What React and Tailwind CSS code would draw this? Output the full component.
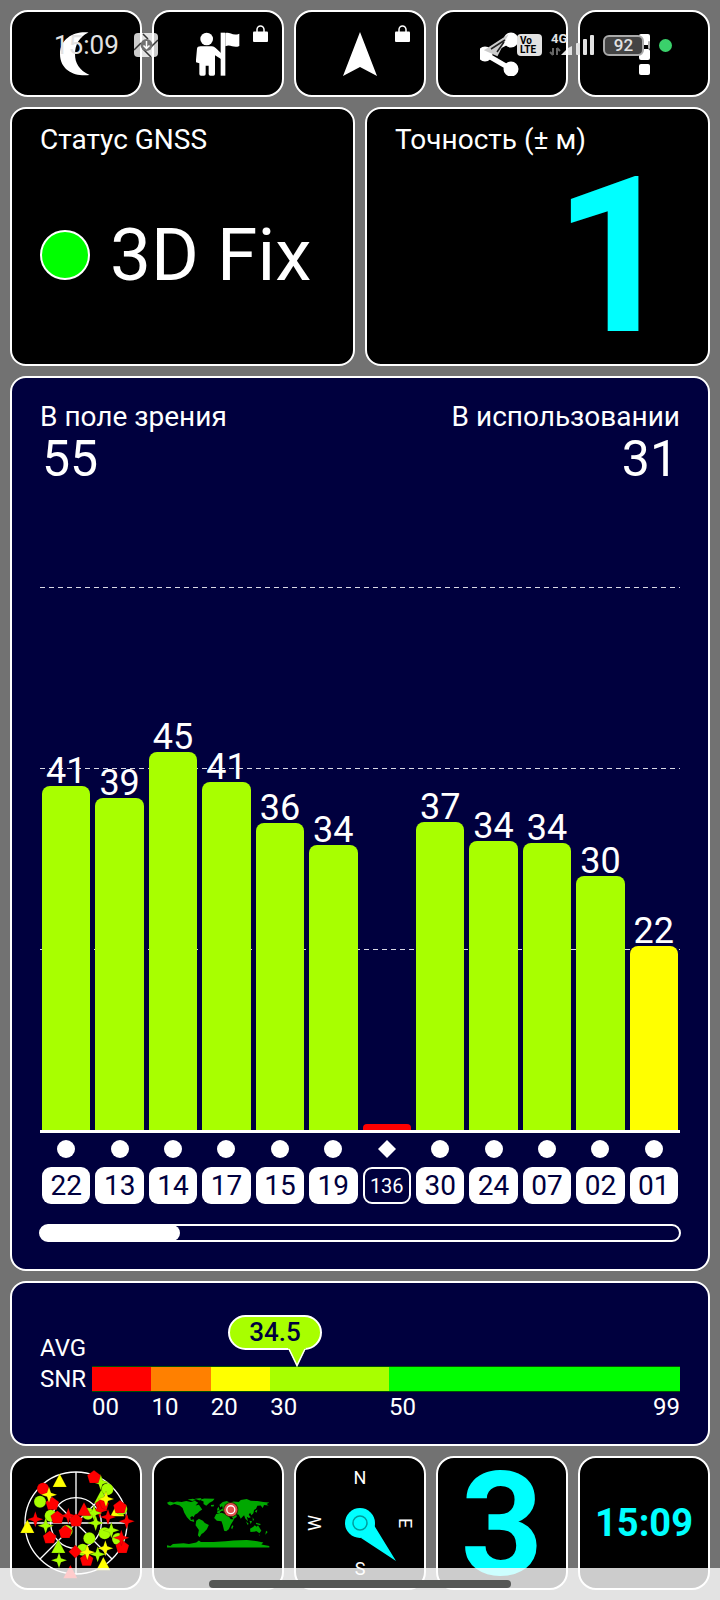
const SATELLITES = [
  { id: "22", snr: 41, level: 63.4 },
  { id: "13", snr: 39, level: 61.1 },
  { id: "14", snr: 45, level: 69.6 },
  { id: "17", snr: 41, level: 64.1 },
  { id: "15", snr: 36, level: 56.5 },
  { id: "19", snr: 34, level: 52.5 },
  { id: "136", snr: null, level: 1.1, sbas: true },
  { id: "30", snr: 37, level: 56.7 },
  { id: "24", snr: 34, level: 53.2 },
  { id: "07", snr: 34, level: 52.9 },
  { id: "02", snr: 30, level: 46.8 },
  { id: "01", snr: 22, level: 33.9 },
];

const SNR_BANDS = [
  { from: "00", span: 10, color: "bg-[#ff0000]" },
  { from: "10", span: 10, color: "bg-[#ff8000]" },
  { from: "20", span: 10, color: "bg-[#ffff00]" },
  { from: "30", span: 20, color: "bg-[#a8ff00]" },
  { from: "50", span: 49, color: "bg-[#00ff00]" },
];

const AVG_SNR = 34.5;

const RED = "#ff0000";
const LIME = "#a8ff00";
const YELLOW = "#ffff00";

// [shape, x, y, colour], painted in order
const SKY = [
  ["circle", 127, 147, RED],
  ["circle", 118, 186, LIME],
  ["pentagon", 155, 192, RED],
  ["star", 145, 165, YELLOW],
  ["triangle", 177, 124, YELLOW],
  ["star", 300, 128, LIME],
  ["circle", 320, 149, LIME],
  ["pentagon", 280, 112, RED],
  ["triangle", 302, 172, LIME],
  ["pentagon", 304, 196, RED],
  ["star", 297, 212, RED],
  ["star", 316, 178, YELLOW],
  ["triangle", 350, 212, YELLOW],
  ["circle", 362, 208, LIME],
  ["pentagon", 358, 202, RED],
  ["circle", 150, 228, LIME],
  ["star", 135, 258, LIME],
  ["star", 104, 239, RED],
  ["pentagon", 170, 233, RED],
  ["star", 203, 228, RED],
  ["circle", 262, 222, LIME],
  ["star", 280, 220, LIME],
  ["triangle", 250, 210, RED],
  ["pentagon", 226, 242, RED],
  ["star", 285, 250, LIME],
  ["star", 322, 232, RED],
  ["star", 378, 245, RED],
  ["triangle", 80, 262, YELLOW],
  ["circle", 198, 274, LIME],
  ["pentagon", 194, 277, RED],
  ["pentagon", 147, 293, RED],
  ["circle", 266, 296, LIME],
  ["circle", 312, 281, LIME],
  ["star", 332, 272, LIME],
  ["circle", 352, 298, LIME],
  ["pentagon", 365, 322, RED],
  ["star", 362, 294, RED],
  ["triangle", 173, 322, LIME],
  ["star", 175, 362, LIME],
  ["circle", 246, 330, LIME],
  ["diamond", 224, 336, RED],
  ["pentagon", 258, 360, RED],
  ["star", 260, 338, YELLOW],
  ["star", 291, 344, LIME],
  ["star", 314, 326, YELLOW],
  ["triangle", 308, 374, YELLOW],
  ["triangle", 209, 398, RED],
];

const SHAPES = {
  pentagon: "0,-20 20,-5 13,18 -13,18 -20,-5",
  star: "0,-24 6,-6 24,0 6,6 0,24 -6,6 -24,0 -6,-6",
  triangle: "0,-22 21,18 -21,18",
  diamond: "0,-20 20,0 0,20 -20,0",
};

export default function App() {
  return (
    <div className="relative min-h-screen bg-[#727272] font-['Roboto',sans-serif] text-white">
      <main className="flex min-h-screen flex-col gap-2.5 p-2.5">
        <Toolbar />
        <div className="grid grid-cols-2 gap-2.5">
          <FixStatus />
          <Accuracy />
        </div>
        <SignalChart />
        <AverageSnr />
        <BottomTiles />
      </main>
      <StatusBar />
      <div className="pointer-events-none absolute inset-x-0 bottom-0 flex h-8 justify-center bg-white/80 pt-3">
        <div className="h-2 w-[42%] rounded-full bg-[#555755]" />
      </div>
    </div>
  );
}

function Toolbar() {
  return (
    <nav className="grid grid-cols-5 gap-2.5">
      <ToolButton label="Ночной режим">
        <svg viewBox="0 0 44 44" className="size-11" fill="#fff">
          <path d="M34.500 0.500C21 -1 6 6 6 22C6 39 22 45 35.500 43C25 38 21 31 21 22C21 13 25 5 34.500 0.500Z" />
        </svg>
      </ToolButton>
      <ToolButton label="Навигация" locked>
        <svg viewBox="588 92 132 132" className="size-11" fill="#fff">
          <circle cx="620" cy="113" r="19" />
          <path d="M602 135H636Q642 135 647 140L663 155V173L645 162V218Q645 223 640 223H631Q626 223 626 218V193H617V218Q617 223 612 223H603Q598 223 598 218V186L588 183V175L591 142Q592 135 602 135Z" />
          <path d="M662 94H676V223H662Z" />
          <path d="M676 96C688 90 698 106 718 97V134C700 142 692 127 676 135Z" />
        </svg>
      </ToolButton>
      <ToolButton label="Направление" locked>
        <svg viewBox="0 0 44 44" className="size-11" fill="#fff">
          <path d="M22 0L39 44L22 35L5 44Z" />
        </svg>
      </ToolButton>
      <ToolButton label="Поделиться">
        <svg viewBox="0 0 44 44" className="size-11" fill="#fff" stroke="#fff" strokeWidth="5">
          <path d="M31 8L5 22L31 37" fill="none" />
          <circle cx="31" cy="8" r="5" />
          <circle cx="5" cy="22" r="5" />
          <circle cx="31" cy="37" r="5" />
        </svg>
      </ToolButton>
      <ToolButton label="Меню">
        <svg viewBox="0 0 44 44" className="size-11" fill="#fff">
          <rect x="17" y="2" width="11" height="11" rx="2" />
          <rect x="17" y="17" width="11" height="11" rx="2" />
          <rect x="17" y="32" width="11" height="11" rx="2" />
        </svg>
      </ToolButton>
    </nav>
  );
}

function ToolButton({ label, locked, children }) {
  return (
    <button
      type="button"
      aria-label={label}
      className="relative flex h-[87px] items-center justify-center rounded-[18px] border-2 border-white bg-black"
    >
      {children}
      {locked && (
        <svg viewBox="0 0 15 17" className="absolute top-[13px] right-[14px] h-[17px] w-[15px]">
          <path d="M4 8V4.500A3.500 3.500 0 0 1 11 4.500V8" fill="none" stroke="#fff" strokeWidth="1.500" />
          <rect y="6.500" width="15" height="10.500" rx="1" fill="#fff" />
        </svg>
      )}
    </button>
  );
}

function FixStatus() {
  return (
    <section className="flex h-[259px] flex-col rounded-2xl border-2 border-white bg-black px-7 pt-[14px]">
      <h2 className="text-[28px] leading-[34px]">Статус GNSS</h2>
      <div className="mt-[58px] flex items-center gap-5">
        <span className="size-[50px] shrink-0 rounded-full border-2 border-white bg-[#00ff00]" />
        <span className="text-[73px] leading-[80px] whitespace-nowrap">3D Fix</span>
      </div>
    </section>
  );
}

function Accuracy() {
  return (
    <section className="flex h-[259px] flex-col rounded-2xl border-2 border-white bg-black px-7 pt-[14px]">
      <h2 className="text-[28px] leading-[34px]">Точность (± м)</h2>
      <span className="pr-0.5 text-right text-[218px] leading-[200px] font-bold text-[#00ffff]">1</span>
    </section>
  );
}

function SignalChart() {
  return (
    <section className="flex flex-1 flex-col rounded-2xl border-2 border-white bg-[#00003e] px-7 pt-[22px] pb-[27px]">
      <div className="flex justify-between">
        <Count label="В поле зрения" value="55" />
        <Count label="В использовании" value="31" end />
      </div>

      <div className="relative mt-[103px] flex min-h-[360px] flex-1 flex-col border-b-[3px] border-white">
        <div className="absolute inset-0 flex flex-col">
          <DashedRow />
          <DashedRow />
          <DashedRow />
        </div>
        <div className="relative flex flex-1 items-stretch gap-[5px] px-0.5">
          {SATELLITES.map((sat) => (
            <div key={sat.id} className="flex flex-1 flex-col justify-end">
              <span className="text-center text-[36px] leading-[30px]">{sat.snr}</span>
              <div
                className={
                  sat.snr === null
                    ? "rounded-t-[4px] bg-[#ff0000]"
                    : sat.snr < 30
                      ? "rounded-t-lg bg-[#ffff00]"
                      : "rounded-t-lg bg-[#a8ff00]"
                }
                style={{ height: `${sat.level}%` }}
              />
            </div>
          ))}
        </div>
      </div>

      <div className="mt-[7px] flex gap-[5px] px-0.5">
        {SATELLITES.map((sat) => (
          <div key={sat.id} className="flex flex-1 flex-col items-center gap-[9px]">
            <svg viewBox="0 0 18 18" className="size-[18px]" fill="#fff">
              {sat.sbas ? <path d="M9 0L18 9L9 18L0 9Z" /> : <circle cx="9" cy="9" r="9" />}
            </svg>
            {sat.sbas ? (
              <span className="flex h-[37px] w-full items-center justify-center rounded-[9px] border-2 border-white text-[20px]">
                {sat.id}
              </span>
            ) : (
              <span className="flex h-[37px] w-full items-center justify-center rounded-[9px] bg-white text-[28px] text-[#00003e]">
                {sat.id}
              </span>
            )}
          </div>
        ))}
      </div>

      <div className="-mx-px mt-5 h-[18px] rounded-full border-2 border-white">
        <div className="-m-px h-4 w-[22%] rounded-full bg-white" />
      </div>
    </section>
  );
}

function Count({ label, value, end }) {
  return (
    <div className={end ? "flex flex-col text-right" : "flex flex-col"}>
      <span className="text-[28px] leading-[34px]">{label}</span>
      <span className="px-0.5 text-[50px] leading-[50px]">{value}</span>
    </div>
  );
}

function DashedRow() {
  return (
    <div className="flex-1">
      <div className="h-px bg-[repeating-linear-gradient(90deg,#d8d8e4_0_5px,transparent_5px_9px)]" />
    </div>
  );
}

function AverageSnr() {
  return (
    <section className="flex rounded-2xl border-2 border-white bg-[#00003e] px-7 pt-[50px] pb-[22px] text-[24px]">
      <div className="w-[52px] shrink-0 leading-[31px]">
        AVG
        <br />
        SNR
      </div>
      <div className="mt-[33px] flex-1">
        <div className="relative flex h-[26px] border-y border-[#005000]">
          {SNR_BANDS.map((band) => (
            <div key={band.from} className={band.color} style={{ flexGrow: band.span }} />
          ))}
          <div
            className="absolute bottom-full"
            style={{ left: `${(AVG_SNR / 99) * 100}%` }}
          >
            <div className="relative -ml-[69px] flex h-[52px] w-[94px] flex-col">
              <span className="flex h-[35px] items-center justify-center rounded-full border-2 border-white bg-[#a8ff00] text-[26px] font-medium text-[#00003e]">
                {AVG_SNR}
              </span>
              <svg viewBox="0 0 18 19" className="absolute bottom-0 left-[60px] h-[19px] w-[18px]">
                <path d="M0 0L9 19L18 0Z" fill="#a8ff00" />
                <path d="M1 1L9 17.500L17 1" fill="none" stroke="#fff" strokeWidth="1.500" />
              </svg>
            </div>
          </div>
        </div>
        <div className="flex leading-[30px]">
          {SNR_BANDS.map((band) => (
            <span key={band.from} className="flex w-0 justify-between" style={{ flexGrow: band.span }}>
              {band.from}
              {band.from === "50" && <span>99</span>}
            </span>
          ))}
        </div>
      </div>
    </section>
  );
}

function BottomTiles() {
  return (
    <nav className="grid grid-cols-5 gap-2.5">
      <Tile label="Карта неба">
        <SkyPlot />
      </Tile>
      <Tile label="Карта мира">
        <WorldMap />
      </Tile>
      <Tile label="Компас">
        <Compass />
      </Tile>
      <Tile>
        <span className="pt-1.5 text-[144px] leading-[120px] font-bold text-[#00ffff]">3</span>
      </Tile>
      <Tile>
        <span className="text-[38px] leading-[44px] font-bold text-[#00ffff]">15:09</span>
      </Tile>
    </nav>
  );
}

function Tile({ label, children }) {
  return (
    <button
      type="button"
      aria-label={label}
      className="flex h-[134px] items-center justify-center rounded-[18px] border-2 border-white bg-black"
    >
      {children}
    </button>
  );
}

function SkyPlot() {
  return (
    <svg viewBox="46 70 360 360" className="size-[120px]">
      <g fill="none" stroke="#fff" strokeWidth="4">
        <circle cx="226" cy="250" r="153" />
        <circle cx="226" cy="250" r="76" />
        <path d="M226 97V403M73 250H379M118 142L334 358M334 142L118 358" />
      </g>
      {SKY.map(([shape, x, y, color], i) =>
        shape === "circle" ? (
          <circle key={i} cx={x} cy={y} r="18" fill={color} stroke="#000" strokeOpacity="0.4" />
        ) : (
          <polygon
            key={i}
            points={SHAPES[shape]}
            transform={`translate(${x} ${y})`}
            fill={color}
            stroke="#000"
            strokeOpacity="0.4"
          />
        ),
      )}
    </svg>
  );
}

function WorldMap() {
  return (
    <svg viewBox="0 0 310 150" className="h-[50px] w-[103px]" fill="#00a800">
      <path d="M0 14L8 10L20 13L30 10L44 12L58 9L72 12L84 8L94 14L86 22L96 20L106 34L98 40L92 46L84 50L80 58L76 54L70 58L72 66L80 64L82 72L70 68L60 58L52 44L47 30L38 22L22 18L10 22L4 19Z" />
      <path d="M62 4L78 2L88 6L76 9ZM84 2L104 0L98 7ZM98 5L112 1L143 2L138 9L128 14L118 23L110 18L110 10Z" />
      <path d="M88 68L96 62L108 68L114 75L126 81L120 94L110 104L104 108L98 118L93 112L96 96L86 82Z" />
      <path d="M132 21L142 20L140 25L133 25ZM151 32L156 26L158 36L151 38Z" />
      <path d="M150 44L152 40L160 36L168 31L166 24L160 28L158 20L168 12L180 9L190 14L200 10L216 12L222 6L240 3L252 8L272 9L290 12L308 13L300 18L306 22L292 21L288 30L282 22L272 23L268 32L262 36L260 46L254 52L250 44L246 50L252 58L246 60L240 56L244 70L236 62L232 52L226 58L222 62L216 50L208 48L210 56L200 64L192 52L184 48L180 42L174 44L168 38L162 40L158 46Z" />
      <path d="M148 48L164 44L182 50L192 64L202 64L192 80L186 94L178 100L172 98L168 82L164 70L150 68L142 60ZM196 82L200 84L196 94L193 90Z" />
      <path d="M250 92L260 86L264 82L270 86L274 82L284 98L278 106L270 100L260 101L251 102Z" />
      <path d="M238 70L246 78L242 80ZM248 68L256 70L252 78ZM258 58L262 66L258 68ZM268 74L282 78L280 82L268 78ZM264 40L272 34L270 44ZM298 98L303 102L296 110ZM276 110L279 110L278 113Z" />
      <path d="M0 142L10 144L18 138L50 136L66 138L88 134L96 128L102 132L140 132L176 130L200 128L240 126L272 130L290 134L284 140L308 144V149H0Z" />
      <circle cx="192" cy="35" r="23" fill="#400" fillOpacity="0.7" />
      <circle cx="192" cy="35" r="20" fill="#e05050" />
      <circle cx="192" cy="35" r="12" fill="none" stroke="#fff" strokeWidth="4" />
    </svg>
  );
}

function Compass() {
  return (
    <svg
      viewBox="-60 -60 120 120"
      className="size-[120px]"
      fill="#fff"
      fontSize="18"
      textAnchor="middle"
    >
      <text y="-39">N</text>
      <text y="-39" transform="rotate(90)">E</text>
      <text y="52">S</text>
      <text y="-39" transform="rotate(-90)">W</text>
      <path d="M14 -4L14.500 3L36 38L1 15Z" fill="#00ffff" />
      <circle r="15" fill="#00ffff" />
      <circle r="7" fill="none" stroke="#009c9c" strokeWidth="1.500" />
    </svg>
  );
}

function StatusBar() {
  return (
    <div className="pointer-events-none absolute inset-x-0 top-0 flex h-[90px] items-center justify-between pr-12 pl-[54px] text-[#e2e2e2]">
      <div className="flex items-center gap-[15px]">
        <span className="text-[26px] leading-[30px]">15:09</span>
        <svg viewBox="0 0 24 24" className="size-6">
          <rect width="24" height="24" rx="4" fill="#fff" fillOpacity="0.8" />
          <path d="M9 1L14 6M0 17L7 10M17 14L24 7M9 16L17 24" stroke="#333" strokeWidth="1.500" />
          <circle cx="12.500" cy="12" r="6" fill="#727272" />
          <path d="M12.500 8V15M9.500 12.500L12.500 15.500L15.500 12.500" fill="none" stroke="#fff" strokeWidth="1.500" />
        </svg>
      </div>
      <div className="flex items-center">
        <svg viewBox="0 0 28 24" className="h-6 w-7">
          <path d="M2 17L22 4L13 22Z" fill="#ccc" stroke="#ccc" strokeWidth="2" />
          <path d="M7 16L21 7M13 19L20 9" stroke="#222" strokeWidth="1.500" />
        </svg>
        <span className="ml-[5px] flex h-[22px] w-[25px] flex-col justify-center rounded-[4px] bg-[#e2e2e2] pl-[3px] text-[10px] leading-[9px] font-bold text-black">
          <span>Vo</span>
          <span>LTE</span>
        </span>
        <span className="relative ml-[7px] h-[22px] w-[45px]">
          <svg viewBox="0 0 45 22" className="size-full">
            <path d="M4 14V21M4 21L1 18M8 21V14M8 14L11 17" fill="none" stroke="#666" strokeWidth="2" />
            <g fill="#e2e2e2">
              <path d="M12 21L17 16V21Z" />
              <path d="M19 14L23 12V21H19Z" />
              <rect x="27" y="9" width="4" height="12" rx="1" />
              <rect x="34" y="5" width="4" height="16" rx="1" />
              <rect x="41" y="1" width="4" height="20" rx="1" />
            </g>
          </svg>
          <span className="absolute -top-0.5 left-0.5 text-[13px] leading-[13px] font-bold">4G</span>
        </span>
        <span className="ml-[9px] flex h-[21px] w-[41px] items-center justify-center rounded-[6px] border-2 border-[#aaa] bg-[#444] text-[17px] leading-none font-medium">
          92
        </span>
        <span className="ml-1 h-2 w-0.5 rounded-full bg-[#aaa]" />
        <span className="ml-[9px] size-[13px] rounded-full bg-[#3ad16b]" />
      </div>
    </div>
  );
}
